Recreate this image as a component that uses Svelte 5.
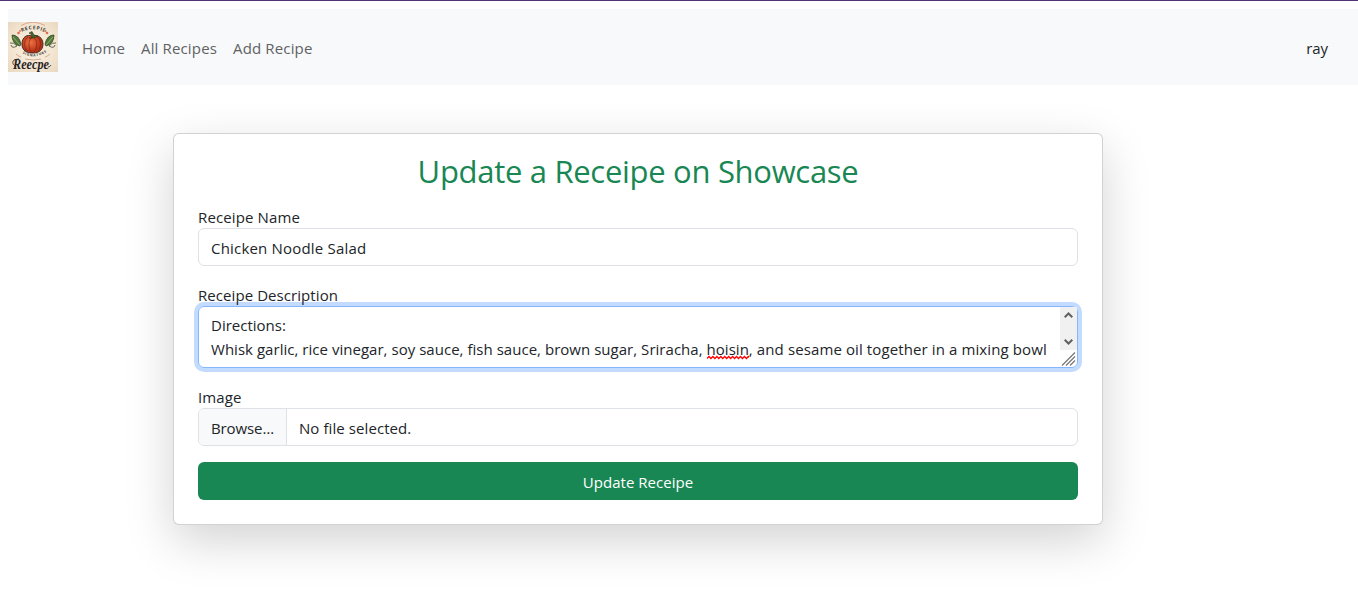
<script lang="ts">
  const name = 'Chicken Noodle Salad';
  const links = ['Home', 'All Recipes', 'Add Recipe'];
</script>

<div class="page">
  <nav class="navbar">
    <svg class="logo" viewBox="0 0 50 50" role="img" aria-label="Recipe logo">
      <defs>
        <radialGradient id="paper" r=".75"><stop offset="0" stop-color="#faf2e4" /><stop offset=".6" stop-color="#f2e4d0" /><stop offset="1" stop-color="#e8d6bc" /></radialGradient>
        <radialGradient id="squash" cx=".4" cy=".4"><stop offset="0" stop-color="#ef7440" /><stop offset="1" stop-color="#b93318" /></radialGradient>
        <path id="arc-top" d="M11 11.5Q25 3 39 11.5" />
        <path id="arc-low" d="M11 29Q25 40 40 29" />
      </defs>
      <rect width="50" height="50" fill="url(#paper)" />
      <path d="M13 3.5Q25-3 37 3.5" fill="none" stroke="#d9977c" stroke-width=".8" />
      <text class="arc"><textPath href="#arc-top" startOffset="3" textLength="24">RECEPIE</textPath></text>
      <g fill="#dc704e"><circle cx="10.5" cy="11" r="1.3" /><circle cx="12" cy="9" r=".9" /><circle cx="39" cy="11" r="1.3" /><circle cx="37.5" cy="9" r=".9" /></g>
      <g fill="#527b38" stroke="#25391f" stroke-width=".7">
        <path d="M4 13q7 0 9 9l-1 2q-8-2-8-11Z" /><path d="M46 13q-7 0-9 9l1 2q8-2 8-11Z" />
        <path d="M2 21q4-1 7 3-5 3-6-1M48 21q-4-1-7 3 5 3 6-1" fill="none" />
        <path d="M5 15l7 8M45 15l-7 8" fill="none" stroke="#b5c285" />
      </g>
      <path d="M24 14c-5-2-10 1-10 8s5 9 11 9 10-3 10-9-5-10-11-8Z" fill="url(#squash)" stroke="#3a2119" stroke-width=".9" />
      <path d="M24 15c-4 3-4 12 0 16M25 15c5 3 5 12 0 16M20 15c-5 3-4 12 0 14M29 15c5 2 4 11 1 14" fill="none" stroke="#7d2415" stroke-width=".7" />
      <path d="M24 16c0-3-1-4-3-5l3-1.5 2 3.5 4 1-4 2-5 0Z" fill="#46602a" stroke="#25321b" stroke-width=".5" />
      <text class="arc low"><textPath href="#arc-low" startOffset="4" textLength="26">SIGNATURE</textPath></text>
      <path d="M8 32Q10 34 13 35M37 35Q40 34 42 32M17 37q8 2 16 0" fill="none" stroke="#c88c70" stroke-width=".7" />
      <text class="script" x="5" y="46.5" textLength="36" lengthAdjust="spacingAndGlyphs">Reecpe</text>
      <path d="M8 44q-4-1-3-5 2-2 6-2M40 45q2 0 3-2" fill="none" stroke="#302b28" stroke-width=".8" />
    </svg>
    <div class="links">
      {#each links as link}<a href="#top">{link}</a>{/each}
    </div>
    <span class="user">ray</span>
  </nav>

  <main class="card">
    <h2>Update a Receipe on Showcase</h2>
    <form onsubmit={(e) => e.preventDefault()}>
      <label for="name">Receipe Name</label>
      <div class="control value">{name}</div>
      <label class="next description" for="description">Receipe Description</label>
      <div class="control area">
        <div class="copy">
          <div>Directions:</div>
          <div class="long">Whisk garlic, rice vinegar, soy sauce, fish sauce, brown sugar, Sriracha, <span class="misspelt">hoisin<svg class="wave" height="5" viewBox="0 0 43 5" preserveAspectRatio="none"><path d="M0 3.5L2 1.5L4 3.5L6 1.5L8 3.5L10 1.5L12 3.5L14 1.5L16 3.5L18 1.5L20 3.5L22 1.5L24 3.5L26 1.5L28 3.5L30 1.5L32 3.5L34 1.5L36 3.5L38 1.5L40 3.5L42 1.5L43 2.5" /></svg></span><span class="rest">, and sesame oil together in a mixing bowl</span></div>
        </div>
        <div class="side">
          <div class="scroll">
            <svg width="9" height="6" viewBox="0 0 9 6"><path d="M.7 5.2l3.8-3.7 3.8 3.7" /></svg>
            <svg width="9" height="6" viewBox="0 0 9 6"><path d="M.7.8l3.8 3.7L8.3.8" /></svg>
          </div>
          <svg class="grip" width="16" height="16" viewBox="0 0 16 16"><path d="M2 15.5L15 2.5M6 15.5l9-9M10 15.5l5-5" /></svg>
        </div>
      </div>
      <label class="next" for="file">Image</label>
      <div class="control file">
        <span class="browse">Browse…</span>
        <span class="chosen">No file selected.</span>
      </div>
      <button type="submit">Update Receipe</button>
    </form>
  </main>
</div>

<style>
  :global(body) { margin: 0; background: #fff; }
  .page { box-sizing: border-box; height: 593px; overflow: hidden; border-top: 1px solid #563279; padding: 8px 0 0 8px; font: 15px/24px "Open Sans", "Noto Sans", sans-serif; color: #212529; }
  .navbar { height: 76px; background: #f8f9fa; display: flex; align-items: center; box-sizing: border-box; padding-right: 30px; }
  .logo { width: 50px; height: 50px; display: block; }
  .arc { font: 700 5px "Open Sans", sans-serif; fill: #443c35; }
  .low { font-size: 3.5px; }
  .script { font: italic 700 14px "Liberation Serif", serif; fill: #25211f; }
  .links { display: flex; gap: 16px; margin-left: 24px; padding-top: 2px; letter-spacing: .15px; }
  a { color: #606264; text-decoration: none; }
  .user { margin-left: auto; padding-top: 2px; letter-spacing: -.1px; }
  .card { box-sizing: border-box; width: 930px; height: 392px; margin: 48px 0 0 165px; padding: 16px 24px 24px; border: 1px solid rgba(0,0,0,.175); border-radius: 6px; background: #fff; box-shadow: 0 16px 48px rgba(0,0,0,.175); }
  h2 { margin: 0 0 16px; height: 38px; font-size: 31px; line-height: 43px; font-weight: 400; letter-spacing: -.3px; color: #198754; text-align: center; }
  form { display: flex; flex-direction: column; }
  label { height: 24px; line-height: 26px; letter-spacing: .13px; z-index: 1; }
  .description { letter-spacing: .07px; }
  .next { margin-top: 16px; }
  .control { box-sizing: border-box; height: 38px; border: 1px solid #dee2e6; border-radius: 6px; padding: 7px 12px; }
  .value { letter-spacing: .19px; }
  .area { height: 62px; padding: 6px 0 0 12px; display: flex; justify-content: space-between; border-color: #86b7fe; box-shadow: 0 0 0 4px #c2dbff; }
  .side { width: 17px; margin-top: -6px; }
  .scroll { height: 43px; background: #f0f0f0; display: flex; flex-direction: column; justify-content: space-between; align-items: center; box-sizing: border-box; padding: 5px 0; }
  .scroll path { fill: none; stroke: #606060; stroke-width: 2; }
  .grip { display: block; }
  .grip path { stroke: #777; stroke-width: 1.2; fill: none; }
  .copy { white-space: nowrap; }
  .long { letter-spacing: .03px; }
  .rest { letter-spacing: .11px; }
  .misspelt { position: relative; }
  .wave { position: absolute; left: 0; bottom: -1px; width: 100%; }
  .wave path { fill: none; stroke: #f00; stroke-width: 1.3; }
  .file { display: flex; padding: 0; overflow: hidden; line-height: 38px; }
  .browse { background: #f8f9fa; width: 75px; border-right: 1px solid #dee2e6; margin-right: 12px; padding-left: 12px; letter-spacing: -.1px; }
  .chosen { letter-spacing: .08px; }
  button { margin-top: 16px; height: 38px; border: 0; border-radius: 6px; background: #198754; color: #fff; font: inherit; line-height: 40px; padding: 0; letter-spacing: .03px; }
</style>
